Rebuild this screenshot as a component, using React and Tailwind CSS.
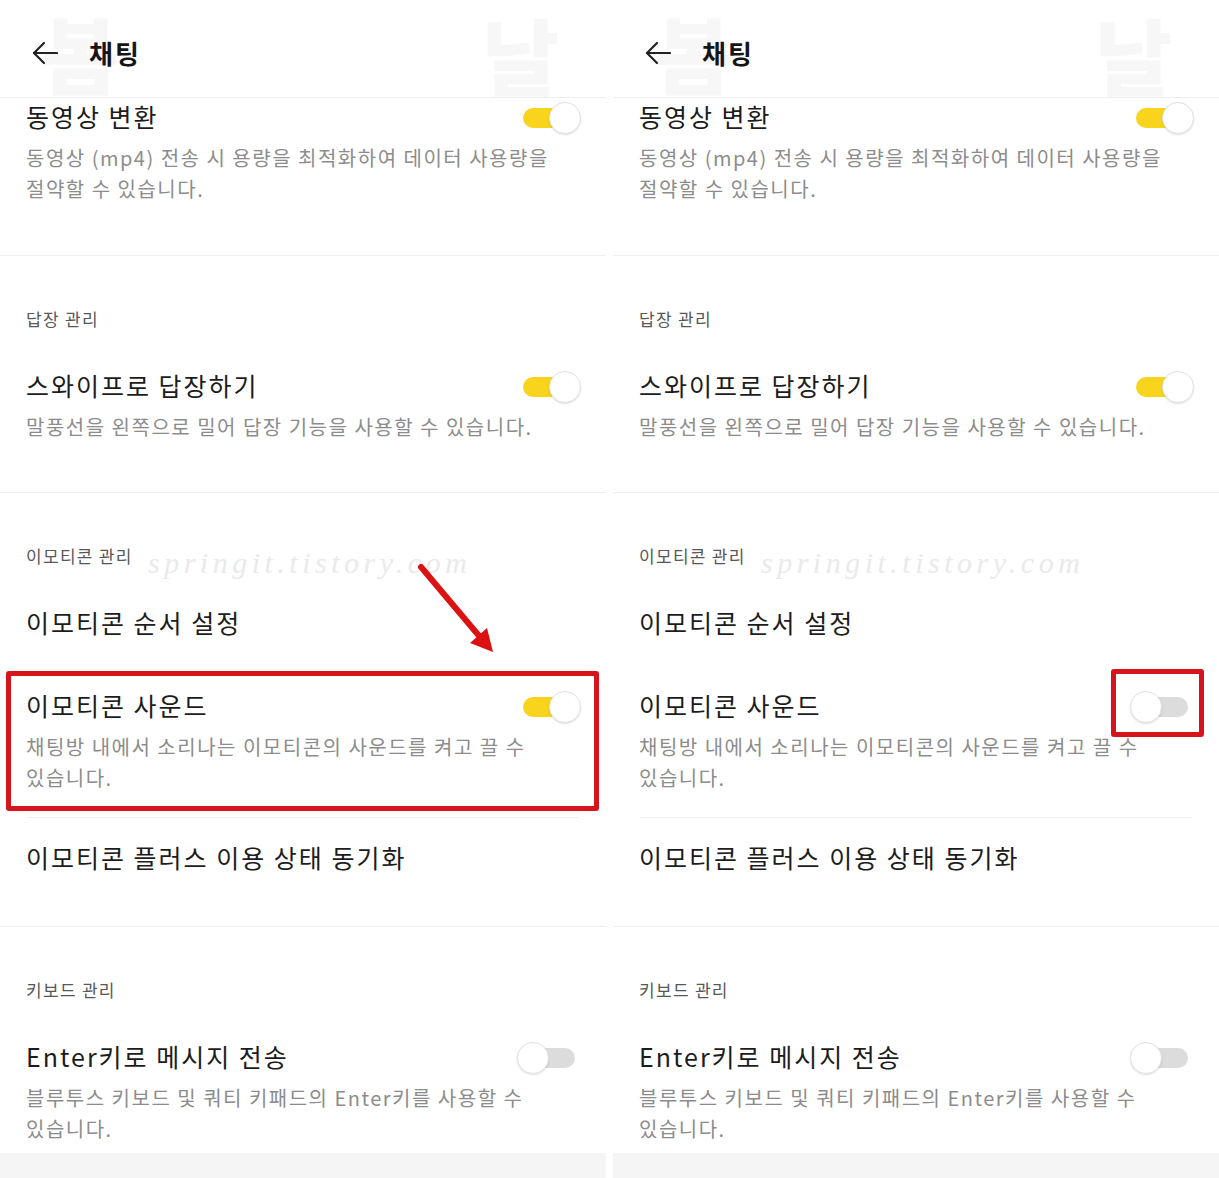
import React from 'react';

const Toggle = ({ on }) => (
  <div className="relative w-[64px] h-[32px] shrink-0">
    <div
      className={`absolute left-[6px] right-[6px] top-[6px] h-[20px] rounded-full ${
        on ? 'bg-[#f8d51c]' : 'bg-[#dcdcdc]'
      }`}
    />
    <div
      className={`absolute top-0 w-[32px] h-[32px] rounded-full bg-white border border-[#e2e2e2] shadow-[0_1px_2px_rgba(0,0,0,0.12)] ${
        on ? 'left-[32px]' : 'left-0'
      }`}
    />
  </div>
);

const Item = ({ title, desc, toggle, className = '' }) => (
  <div className={`pl-[26px] pr-[25px] ${className}`}>
    <div className="flex items-start justify-between">
      <div className="text-[25px] leading-[36px] tracking-[2px] text-[#1c1c1c] whitespace-nowrap">{title}</div>
      {toggle !== undefined && (
        <div className="mt-[4px]">
          <Toggle on={toggle} />
        </div>
      )}
    </div>
    {desc && (
      <p className="mt-[8px] text-[20px] leading-[31px] tracking-[1.5px] text-[#8c8c8c] break-keep">{desc}</p>
    )}
  </div>
);

const Label = ({ children }) => (
  <div className="pl-[26px] text-[17px] leading-[24px] tracking-[1.3px] text-[#575757]">{children}</div>
);

const Panel = ({ soundOn, boxAround }) => (
  <div className="relative w-[606px] h-[1178px] flex flex-col bg-white overflow-hidden">
    {/* faint blog watermarks */}
    <span className="absolute left-[42px] top-[4px] text-[84px] font-black leading-[96px] text-[#f7f7f7]">봄</span>
    <span className="absolute left-[482px] top-[6px] text-[84px] font-black leading-[96px] text-[#f7f7f7]">날</span>
    <span className="absolute left-[148px] top-[543px] font-['Liberation_Serif'] italic text-[30px] leading-[40px] tracking-[4.5px] text-[#eaeaea]">
      springit.tistory.com
    </span>

    {/* header */}
    <div className="relative h-[98px] border-b border-[#eeeeee] flex items-center pl-[32px] pt-[8px]">
      <svg width="26" height="24" viewBox="0 0 26 24" fill="none" stroke="#222" strokeWidth="2.2" strokeLinecap="round" strokeLinejoin="round">
        <path d="M25 12H2" />
        <path d="M12 2 2 12l10 10" />
      </svg>
      <span className="ml-[31px] text-[26px] leading-[36px] font-bold tracking-[2px] text-[#151515]">채팅</span>
    </div>

    <div className="relative h-[158px] border-b border-[#efefef]">
      <Item
        title="동영상 변환"
        toggle={true}
        desc="동영상 (mp4) 전송 시 용량을 최적화하여 데이터 사용량을 절약할 수 있습니다."
      />
    </div>

    <div className="relative h-[237px] pt-[51px] border-b border-[#efefef]">
      <Label>답장 관리</Label>
      <Item
        className="mt-[36px]"
        title="스와이프로 답장하기"
        toggle={true}
        desc="말풍선을 왼쪽으로 밀어 답장 기능을 사용할 수 있습니다."
      />
    </div>

    <div className="relative h-[434px] pt-[51px] border-b border-[#efefef]">
      <Label>이모티콘 관리</Label>
      <Item className="mt-[36px]" title="이모티콘 순서 설정" />
      <Item
        className="mt-[47px]"
        title="이모티콘 사운드"
        toggle={soundOn}
        desc="채팅방 내에서 소리나는 이모티콘의 사운드를 켜고 끌 수 있습니다."
      />
      <div className="mt-[24px] mx-[27px] h-px bg-[#efefef]" />
      <Item className="mt-[21px]" title="이모티콘 플러스 이용 상태 동기화" />
    </div>

    <div className="relative h-[226px] pt-[51px]">
      <Label>키보드 관리</Label>
      <Item
        className="mt-[36px]"
        title="Enter키로 메시지 전송"
        toggle={false}
        desc="블루투스 키보드 및 쿼티 키패드의 Enter키를 사용할 수 있습니다."
      />
    </div>
    <div className="flex-1 bg-[#f5f5f5]" />

    {/* annotations */}
    {boxAround === 'row' && (
      <>
        <div className="absolute left-[6px] top-[671px] w-[593px] h-[140px] border-[5px] border-[#d5141b] rounded-[3px]" />
        <svg className="absolute left-[410px] top-[555px]" width="95" height="105" viewBox="0 0 95 105">
          <line x1="11" y1="12" x2="70" y2="82" stroke="#dc1212" strokeWidth="6" strokeLinecap="round" />
          <polygon points="83,97 60,88 77,73" fill="#dc1212" />
        </svg>
      </>
    )}
    {boxAround === 'toggle' && (
      <div className="absolute left-[498px] top-[669px] w-[93px] h-[68px] border-[5px] border-[#d5141b] rounded-[3px]" />
    )}
  </div>
);

export default function App() {
  return (
    <div className="w-[1219px] h-[1178px] flex gap-[7px] bg-white font-['Noto_Sans_CJK_KR',sans-serif]">
      <Panel soundOn={true} boxAround="row" />
      <Panel soundOn={false} boxAround="toggle" />
    </div>
  );
}
